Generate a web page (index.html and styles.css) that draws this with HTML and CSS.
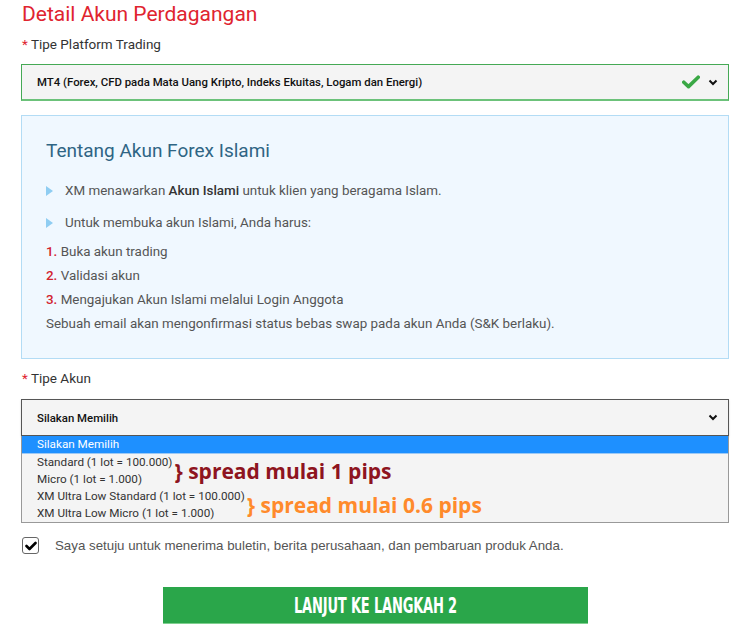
FILE: index.html
```html
<!DOCTYPE html>
<html lang="id">
<head>
  <meta charset="UTF-8" />
  <meta name="viewport" content="width=device-width, initial-scale=1.0" />
  <title>Detail Akun Perdagangan</title>
  <link rel="stylesheet" href="styles.css">
</head>
<body>
  <div class="page">
    <h1 class="title">Detail Akun Perdagangan</h1>

    <div class="field-label"><span class="req">*</span> Tipe Platform Trading</div>
    <div class="select select-valid">
      <span class="select-text">MT4 (Forex, CFD pada Mata Uang Kripto, Indeks Ekuitas, Logam dan Energi)</span>
      <svg class="ok" width="18" height="14" viewBox="0 0 18 14"><path d="M1.8 7.2 L6.5 11.6 L16.2 2.2" fill="none" stroke="#3aa845" stroke-width="3.6" stroke-linecap="round" stroke-linejoin="round"/></svg>
      <svg class="chev" width="10" height="7" viewBox="0 0 10 7"><path d="M1.5 1.5 L5 5 L8.5 1.5" fill="none" stroke="#111" stroke-width="2"/></svg>
    </div>

    <div class="info">
      <h2 class="info-title">Tentang Akun Forex Islami</h2>
      <ul class="bullets">
        <li>XM menawarkan <b>Akun Islami</b> untuk klien yang beragama Islam.</li>
        <li>Untuk membuka akun Islami, Anda harus:</li>
      </ul>
      <ol class="steps">
        <li><span class="num">1.</span> Buka akun trading</li>
        <li><span class="num">2.</span> Validasi akun</li>
        <li><span class="num">3.</span> Mengajukan Akun Islami melalui Login Anggota</li>
      </ol>
      <p class="note">Sebuah email akan mengonfirmasi status bebas swap pada akun Anda (S&amp;K berlaku).</p>
    </div>

    <div class="field-label label-gap"><span class="req">*</span> Tipe Akun</div>
    <div class="select select-open">
      <span class="select-text">Silakan Memilih</span>
      <svg class="chev" width="10" height="7" viewBox="0 0 10 7"><path d="M1.5 1.5 L5 5 L8.5 1.5" fill="none" stroke="#111" stroke-width="2"/></svg>
    </div>
    <div class="dropdown">
      <div class="option selected">Silakan Memilih</div>
      <div class="group">
        <div class="group-options">
          <div class="option">Standard (1 lot = 100.000)</div>
          <div class="option">Micro (1 lot = 1.000)</div>
        </div>
        <span class="note-mark mark-red">} spread mulai 1 pips</span>
      </div>
      <div class="group">
        <div class="group-options">
          <div class="option">XM Ultra Low Standard (1 lot = 100.000)</div>
          <div class="option">XM Ultra Low Micro (1 lot = 1.000)</div>
        </div>
        <span class="note-mark mark-orange">} spread mulai 0.6 pips</span>
      </div>
    </div>

    <label class="agree">
      <span class="checkbox">
        <svg width="12" height="10" viewBox="0 0 12 10"><path d="M1.5 5 L4.5 8 L10.5 2" fill="none" stroke="#000" stroke-width="2.6" stroke-linecap="round" stroke-linejoin="round"/></svg>
      </span>
      Saya setuju untuk menerima buletin, berita perusahaan, dan pembaruan produk Anda.
    </label>

    <div class="actions">
      <button class="next-btn"><span>LANJUT KE LANGKAH 2</span></button>
    </div>
  </div>
</body>
</html>
```

FILE: styles.css
```css
* {
  box-sizing: border-box;
  margin: 0;
  padding: 0;
}

body {
  font-family: Roboto, 'Noto Sans', sans-serif;
  background: #fff;
  color: #333;
}

.page {
  width: 708px;
  margin-left: 21px;
  padding-top: 2px;
}

.title {
  font-size: 21px;
  font-weight: 400;
  color: #e0242f;
  line-height: 24px;
  margin-left: 1px;
}

.field-label {
  font-size: 13.5px;
  color: #333;
  line-height: 18px;
  margin: 9px 0 0 1px;
}

.label-gap {
  margin-top: 10px;
}

.req {
  color: #e0242f;
}

.select {
  display: flex;
  align-items: center;
  height: 37px;
  padding: 0 10px 0 15px;
  background: #f4f4f4;
  border: 1px solid #555;
  font-size: 11.4px;
  font-weight: 500;
  color: #111;
}

.select-text {
  flex: 1;
}

.select-valid {
  margin-top: 11px;
  border: 1px solid #45a955;
  border-bottom-width: 2px;
  border-bottom-color: #6cc27a;
}

.select .ok {
  margin-right: 8px;
}

.select-open {
  margin-top: 12px;
  box-shadow: 0 1px 2px rgba(0,0,0,0.15);
}

.info {
  margin-top: 14px;
  background: #f0f8ff;
  border: 1px solid #b3dcf5;
  padding: 23px 24px 22px;
  color: #555;
  font-size: 13.4px;
}

.info-title {
  font-size: 19px;
  font-weight: 400;
  color: #2f6584;
  line-height: 24px;
  margin-bottom: 18px;
}

.bullets {
  list-style: none;
}

.bullets li {
  position: relative;
  padding-left: 19px;
  line-height: 20px;
  margin-bottom: 12px;
}

.bullets li::before {
  content: '';
  position: absolute;
  left: 0;
  top: 5px;
  border-left: 7px solid #8fcdf2;
  border-top: 5px solid transparent;
  border-bottom: 5px solid transparent;
}

.bullets b {
  color: #333;
  font-weight: 500;
}

.steps {
  list-style: none;
  margin-top: -5px;
}

.steps li,
.note {
  line-height: 24px;
}

.num {
  color: #d2232f;
  font-weight: 500;
}

.dropdown {
  background: #f4f4f4;
  border: 1px solid #999;
  border-top: none;
  font-size: 11.7px;
  color: #333;
}

.option {
  height: 17px;
  line-height: 17px;
  padding-left: 15px;
}

.option.selected {
  height: 18px;
  background: #1e90ff;
  color: #fff;
  border-bottom: 1px solid #9cc9f5;
}

.group {
  display: flex;
  align-items: center;
}

.note-mark {
  font-family: 'Open Sans', 'Noto Sans', sans-serif;
  font-weight: 700;
  font-size: 21px;
  line-height: 24px;
  margin-left: 2px;
}

.mark-red {
  color: #8e1420;
}

.mark-orange {
  color: #ff8a2b;
}

.agree {
  display: flex;
  align-items: center;
  gap: 16px;
  margin-top: 14px;
  margin-left: 1px;
  font-family: 'Liberation Sans', Arial, sans-serif;
  font-size: 13.3px;
  color: #555;
}

.checkbox {
  width: 17px;
  height: 17px;
  border: 1px solid #666;
  border-radius: 3px;
  background: #fff;
  display: flex;
  align-items: center;
  justify-content: center;
}

.actions {
  display: flex;
  margin-top: 33px;
  padding-left: 142px;
}

.next-btn {
  width: 425px;
  height: 37px;
  background: #2aa64a;
  border: none;
  border-bottom: 1px solid #7fcf8f;
  color: #fff;
  font-family: 'DejaVu Sans Condensed', 'DejaVu Sans', sans-serif;
  font-weight: 700;
  font-size: 22px;
  cursor: pointer;
}

.next-btn span {
  display: inline-block;
  transform: scaleX(0.66);
  letter-spacing: -0.3px;
}
```
